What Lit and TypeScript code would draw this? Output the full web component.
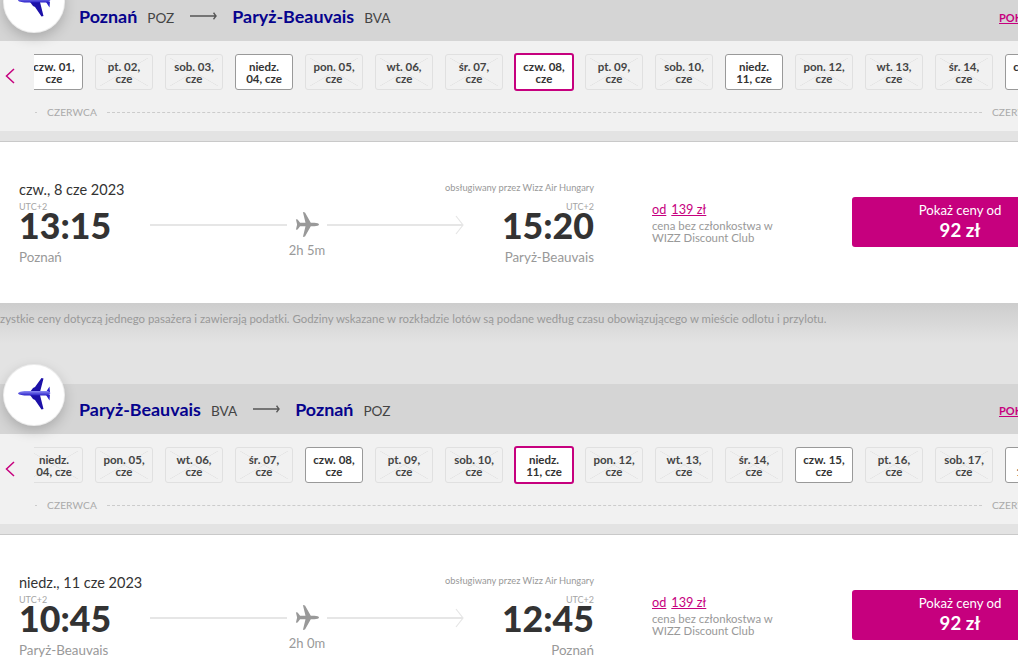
import { LitElement, html, css, svg } from "lit";
import { customElement } from "lit/decorators.js";

const PLANE = "M24 12.5c0-1-2.2-1.7-4.6-1.7h-3.6L10 .4 7.9 0l2.6 10.8H5.1L2.6 7.6.9 7.2l1.2 5.3-1.2 5.3 1.7-.4 2.5-3.2h5.4L7.9 25l2.1-.4 5.8-10.4h3.6c2.4 0 4.6-.7 4.6-1.7z";

interface Day { a: string; b: string; on?: boolean; sel?: boolean }
interface Sec {
  from: string; fromC: string; to: string; toC: string;
  date: string; t1: string; t2: string; dur: string;
  days: Day[]; note?: boolean;
}

const d = (a: string, b = "cze", on = false, sel = false): Day => ({ a, b, on, sel });

const SECS: Sec[] = [
  {
    from: "Poznań", fromC: "POZ", to: "Paryż-Beauvais", toC: "BVA",
    date: "czw., 8 cze 2023", t1: "13:15", t2: "15:20", dur: "2h 5m", note: true,
    days: [
      d("czw. 01,", "cze", true), d("pt. 02,"), d("sob. 03,"), d("niedz.", "04, cze", true),
      d("pon. 05,"), d("wt. 06,"), d("śr. 07,"), d("czw. 08,", "cze", true, true),
      d("pt. 09,"), d("sob. 10,"), d("niedz.", "11, cze", true), d("pon. 12,"),
      d("wt. 13,"), d("śr. 14,"), d("czw. 15,", "cze", true),
    ],
  },
  {
    from: "Paryż-Beauvais", fromC: "BVA", to: "Poznań", toC: "POZ",
    date: "niedz., 11 cze 2023", t1: "10:45", t2: "12:45", dur: "2h 0m",
    days: [
      d("niedz.", "04, cze"), d("pon. 05,"), d("wt. 06,"), d("śr. 07,"),
      d("czw. 08,", "cze", true), d("pt. 09,"), d("sob. 10,"), d("niedz.", "11, cze", true, true),
      d("pon. 12,"), d("wt. 13,"), d("śr. 14,"), d("czw. 15,", "cze", true),
      d("pt. 16,"), d("sob. 17,"), d("niedz.", "18, cze", true),
    ],
  },
];

@customElement("app-root")
export class AppRoot extends LitElement {
  static styles = css`
    :host { display: block; width: 1018px; height: 659px; overflow: hidden; background: #e3e3e3;
      font-family: "Lato", "Noto Sans", sans-serif; color: #333; }
    .page { margin-top: -9px; width: 1018px; }
    .sec { position: relative; }
    .logo { position: absolute; left: 4px; top: -19px; width: 60px; height: 60px; border-radius: 50%;
      background: #fff; box-shadow: 0 0 0 1px #ececec, 0 5px 14px rgba(0,0,0,.22); z-index: 2; display: block; }
    .head { height: 50px; background: #d5d5d5; display: flex; align-items: flex-start; padding: 15px 0 0 79px;
      box-sizing: border-box; position: relative; overflow: hidden; }
    .route { display: flex; align-items: baseline; height: 20px; white-space: nowrap; }
    .city { font: 700 17.9px/20px "Lato", sans-serif; color: #06038d; }
    .code { font: 400 13.6px/20px "Lato", sans-serif; color: #444; margin: 0 0 0 10px; }
    .arr { width: 27px; height: 8px; margin: 0 15px 0 16px; align-self: center; display: block; }
    .more { position: absolute; left: 999px; bottom: 17px; font: 700 11px/13px "Lato", sans-serif; color: #c6007e;
      text-decoration: underline; white-space: nowrap; }
    .strip { height: 90px; background: #f1f1f1; display: flex; position: relative; }
    .prev { width: 34px; flex: none; display: block; }
    .prev svg { display: block; margin: 27px 0 0 5px; }
    .scroll { flex: 1; overflow: hidden; height: 75px; min-width: 0; }
    .tiles { display: flex; gap: 12px; margin: 13px 0 0 -9px; width: max-content; }
    .tile { width: 58px; height: 36px; box-sizing: border-box; border: 1px solid #e0e0e0; border-radius: 3px; padding-top: 1px;
      font: 700 11.5px/12px "Lato", sans-serif; color: #444; display: flex; flex-direction: column;
      align-items: center; justify-content: center; text-align: center;
      background-image:
        linear-gradient(to top right, transparent calc(50% - .6px), #e2e2e2 50%, transparent calc(50% + .6px)),
        linear-gradient(to bottom right, transparent calc(50% - .6px), #e2e2e2 50%, transparent calc(50% + .6px));
      background-repeat: no-repeat; background-position: center; background-size: calc(100% - 8px) calc(100% - 6px); }
    .tile.on { background: #fff; border-color: #999; color: #333; }
    .tile.sel { border: 2px solid #c6007e; width: 60px; height: 38px; margin: -1px; }
    .months { display: flex; align-items: flex-start; margin: 17px 0 0 1px; height: 11px; width: max-content; }
    .month { font: 400 10.2px/11px "Lato", sans-serif; color: #aaa; margin: 0 10px; letter-spacing: .1px; }
    .dash { border-top: 1px dashed #ccc; height: 0; margin-top: 5px; }
    .band { height: 10px; background: #e3e3e3; border-bottom: 1px solid #c9c9c9; }
    .card { background: #fff; height: 161px; display: grid; grid-template-columns: 594px 1fr; position: relative; }
    .flight { padding: 39px 0 0 19px; display: flex; flex-direction: column; }
    .top { display: flex; justify-content: space-between; align-items: flex-start; height: 18px; }
    .date { font: 400 14.5px/18px "Lato", sans-serif; color: #333; }
    .oper { font: 400 9.3px/12px "Lato", sans-serif; color: #999; margin-top: 1px; }
    .times { display: grid; grid-template-columns: 131px 314px 130px; margin-top: 2px; }
    .ep { display: flex; flex-direction: column; }
    .ep.r { align-items: flex-end; text-align: right; }
    .utc { font: 400 9px/11px "Lato", sans-serif; color: #a5a5a5; margin-bottom: -4px; }
    .t { font: 900 35.7px/36px "Lato", sans-serif; color: #333; }
    .place { font: 400 13.4px/18px "Lato", sans-serif; color: #999; margin-top: 4px; }
    .mid { display: flex; flex-direction: column; align-items: center; padding-top: 11px; }
    .line { display: flex; align-items: center; width: 314px; gap: 8px; }
    .seg { height: 0; border-top: 2px solid #e6e6e6; flex: 1; }
    .plane { width: 24px; height: 25px; display: block; flex: none; }
    .tail { display: flex; align-items: center; flex: 1; position: relative; }
    .tail .seg { flex: 1; }
    .tail svg { display: block; margin-left: -8px; }
    .dur { font: 400 13px/16px "Lato", sans-serif; color: #999; margin-top: 5px; }
    .info { display: flex; padding: 0 0 0 58px; }
    .price { width: 200px; padding-top: 59px; flex: none; box-sizing: border-box; }
    .od { font: 400 12.7px/16px "Lato", sans-serif; color: #c6007e; }
    .od span { text-decoration: underline; margin-right: 5px; }
    .desc { font: 400 11.4px/12px "Lato", sans-serif; color: #999; margin-top: 3px; }
    .btn { width: 216px; height: 50px; flex: none; margin-top: 55px; background: #c6007e; border-radius: 3px; color: #fff;
      display: flex; flex-direction: column; align-items: center; justify-content: center; }
    .btn .l { font: 400 13.2px/16px "Lato", sans-serif; margin-top: -1px; }
    .btn .p { font: 700 18.6px/24px "Lato", sans-serif; }
    .note { height: 81px; background: linear-gradient(#cdcdcd, #e3e3e3 40px); box-sizing: border-box; padding-top: 9px;
      font: 400 11.4px/14px "Lato", sans-serif; color: #999; white-space: nowrap; overflow: hidden; }
    .note span { display: block; margin-left: -16px; }
  `;

  private strip(days: Day[]) {
    return html`<div class="strip">
      <div class="prev"><svg width="10" height="16" viewBox="0 0 10 16"><path d="M9 1 L1.5 8 L9 15" fill="none" stroke="#c6007e" stroke-width="1.5"/></svg></div>
      <div class="scroll">
        <div class="tiles">${days.map((x) => html`<div class="tile ${x.on ? "on" : ""} ${x.sel ? "sel" : ""}"><div>${x.a}</div><div>${x.b}</div></div>`)}</div>
        <div class="months">
          <div class="dash" style="width:2px"></div><div class="month">CZERWCA</div>
          <div class="dash" style="width:875px"></div><div class="month">CZERWCA</div>
        </div>
      </div>
    </div>`;
  }

  private sec(s: Sec) {
    return html`<section class="sec">
      <svg class="logo" viewBox="0 0 60 60">
        <defs><linearGradient id="fus" x1="0" y1="0" x2="0" y2="1"><stop offset="0" stop-color="#8d8df5"/><stop offset="1" stop-color="#2a20c8"/></linearGradient></defs>
        ${svg`<path d="M26 27 L29 23 L31 22 L37.5 13 L39.5 13.5 L36 27 Z M26 30 L29 34 L31 35 L37.5 44.5 L39.5 44 L36 30 Z" fill="#1c10a8"/>
        <path d="M42 27 L45.5 21.5 L46 27.5 Z M42 30 L45.5 35.5 L46 29.5 Z" fill="#2a20c8"/>
        <path d="M14 28.5 C15 26.5 19 26 24 26 H44 L46.5 28 L44 30.5 H24 C19 30.5 15 30 14 28.5 Z" fill="url(#fus)"/>`}
      </svg>
      <div class="head">
        <div class="route">
          <span class="city">${s.from}</span><span class="code">${s.fromC}</span>
          <svg class="arr" viewBox="0 0 27 8"><path d="M0 4 H26 M23.5 .8 C24.5 2 25 3 26 4 C25 5 24.5 6 23.5 7.2" fill="none" stroke="#555" stroke-width="1.4"/></svg>
          <span class="city">${s.to}</span><span class="code">${s.toC}</span>
        </div>
        <span class="more">POKAŻ</span>
      </div>
      ${this.strip(s.days)}
      <div class="band"></div>
      <div class="card">
        <div class="flight">
          <div class="top"><span class="date">${s.date}</span><span class="oper">obsługiwany przez Wizz Air Hungary</span></div>
          <div class="times">
            <div class="ep"><span class="utc">UTC+2</span><span class="t">${s.t1}</span><span class="place">${s.from}</span></div>
            <div class="mid">
              <div class="line">
                <div class="seg"></div>
                <svg class="plane" viewBox="0 0 24 25"><path d="${PLANE}" fill="#999"/></svg>
                <div class="tail"><div class="seg"></div><svg width="9" height="20" viewBox="0 0 9 20"><path d="M1 1 L8 10 L1 19" fill="none" stroke="#e6e6e6" stroke-width="1.2"/></svg></div>
              </div>
              <div class="dur">${s.dur}</div>
            </div>
            <div class="ep r"><span class="utc">UTC+2</span><span class="t">${s.t2}</span><span class="place">${s.to}</span></div>
          </div>
        </div>
        <div class="info">
          <div class="price">
            <div class="od"><span>od</span><span>139 zł</span></div>
            <div class="desc">cena bez członkostwa w<br/>WIZZ Discount Club</div>
          </div>
          <div class="btn"><span class="l">Pokaż ceny od</span><span class="p">92 zł</span></div>
        </div>
      </div>
      ${s.note ? html`<div class="note"><span>Wszystkie ceny dotyczą jednego pasażera i zawierają podatki. Godziny wskazane w rozkładzie lotów są podane według czasu obowiązującego w mieście odlotu i przylotu.</span></div>` : ""}
    </section>`;
  }

  render() {
    return html`<div class="page">${SECS.map((s) => this.sec(s))}</div>`;
  }
}
